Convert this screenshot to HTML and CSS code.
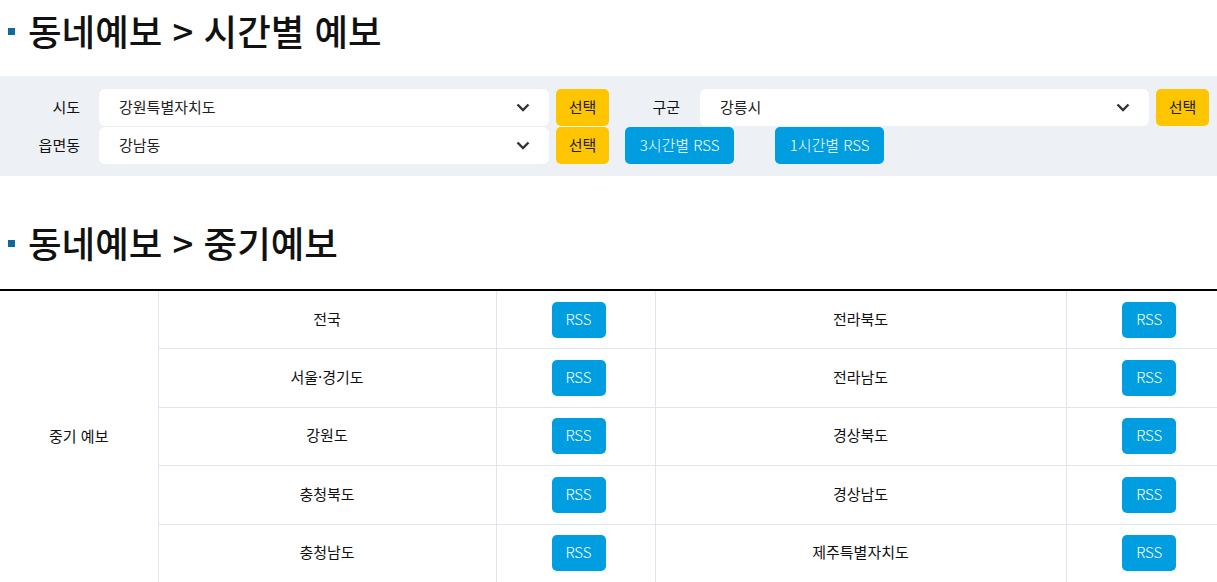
FILE: index.html
```html
<!DOCTYPE html>
<html lang="ko">
<head>
  <meta charset="UTF-8">
  <meta name="viewport" content="width=device-width, initial-scale=1.0">
  <title>동네예보 RSS</title>
  <link rel="stylesheet" href="styles.css">
</head>
<body>

  <h2 class="section-title">동네예보 &gt; 시간별 예보</h2>

  <div class="search-panel">
    <div class="search-row">
      <label class="field-label">시도</label>
      <div class="select-box">
        <span>강원특별자치도</span>
        <svg class="chevron" width="14" height="9" viewBox="0 0 14 9"><path d="M1.5 1.5 L7 7 L12.5 1.5" fill="none" stroke="#333" stroke-width="2.4"/></svg>
      </div>
      <button type="button" class="btn-select">선택</button>

      <label class="field-label label-gugun">구군</label>
      <div class="select-box select-right">
        <span>강릉시</span>
        <svg class="chevron" width="14" height="9" viewBox="0 0 14 9"><path d="M1.5 1.5 L7 7 L12.5 1.5" fill="none" stroke="#333" stroke-width="2.4"/></svg>
      </div>
      <button type="button" class="btn-select">선택</button>
    </div>

    <div class="search-row">
      <label class="field-label">읍면동</label>
      <div class="select-box">
        <span>강남동</span>
        <svg class="chevron" width="14" height="9" viewBox="0 0 14 9"><path d="M1.5 1.5 L7 7 L12.5 1.5" fill="none" stroke="#333" stroke-width="2.4"/></svg>
      </div>
      <button type="button" class="btn-select">선택</button>
      <button type="button" class="btn-rss btn-wide first-rss">3시간별 RSS</button>
      <button type="button" class="btn-rss btn-wide second-rss">1시간별 RSS</button>
    </div>
  </div>

  <h2 class="section-title second">동네예보 &gt; 중기예보</h2>

  <div class="table-wrap">
    <table class="rss-table">
      <colgroup>
        <col style="width:158px">
        <col style="width:338px">
        <col style="width:159px">
        <col style="width:411px">
        <col style="width:166px">
      </colgroup>
      <tbody>
        <tr>
          <th rowspan="5">중기 예보</th>
          <td>전국</td>
          <td class="btn-cell shift"><button type="button" class="btn-rss">RSS</button></td>
          <td>전라북도</td>
          <td class="btn-cell"><button type="button" class="btn-rss">RSS</button></td>
        </tr>
        <tr>
          <td>서울·경기도</td>
          <td class="btn-cell shift"><button type="button" class="btn-rss">RSS</button></td>
          <td>전라남도</td>
          <td class="btn-cell"><button type="button" class="btn-rss">RSS</button></td>
        </tr>
        <tr>
          <td>강원도</td>
          <td class="btn-cell shift"><button type="button" class="btn-rss">RSS</button></td>
          <td>경상북도</td>
          <td class="btn-cell"><button type="button" class="btn-rss">RSS</button></td>
        </tr>
        <tr>
          <td>충청북도</td>
          <td class="btn-cell shift"><button type="button" class="btn-rss">RSS</button></td>
          <td>경상남도</td>
          <td class="btn-cell"><button type="button" class="btn-rss">RSS</button></td>
        </tr>
        <tr>
          <td>충청남도</td>
          <td class="btn-cell shift"><button type="button" class="btn-rss">RSS</button></td>
          <td>제주특별자치도</td>
          <td class="btn-cell"><button type="button" class="btn-rss">RSS</button></td>
        </tr>
      </tbody>
    </table>
  </div>

</body>
</html>
```

FILE: styles.css
```css
html, body {
  overflow: hidden;
}

body {
  margin: 0;
  font-family: "Noto Sans CJK KR", "Noto Sans", sans-serif;
  font-size: 15px;
  color: #111;
}

.section-title {
  display: flex;
  align-items: center;
  margin: 0 0 16px;
  padding-left: 8px;
  height: 60px;
  font-size: 36.5px;
  font-weight: 500;
  color: #111;
}

.section-title::before {
  content: "";
  width: 7px;
  height: 7px;
  margin-right: 13px;
  margin-top: 3px;
  background-color: #0e6a9c;
}

.section-title.second {
  margin-top: 36px;
  margin-bottom: 17px;
}

.search-panel {
  padding: 13px 0 12px;
  background-color: #edf0f5;
}

.search-row {
  display: flex;
  align-items: center;
  height: 37px;
}

.search-row + .search-row {
  margin-top: 1px;
}

.field-label {
  width: 80px;
  margin-right: 19px;
  padding-bottom: 2px;
  text-align: right;
  color: #111;
}

.label-gugun {
  width: 71px;
  margin-right: 20px;
}

.select-box {
  display: flex;
  align-items: center;
  justify-content: space-between;
  box-sizing: border-box;
  width: 450px;
  height: 37px;
  padding: 0 19px 0 20px;
  background-color: #fff;
  border-radius: 6px;
  color: #222;
}

.select-box span {
  padding-bottom: 3px;
}

.select-right {
  width: 449px;
}

.chevron {
  display: block;
}

button {
  box-sizing: border-box;
  font-family: "Noto Sans CJK KR", "Noto Sans", sans-serif;
  font-size: 15px;
  border: none;
  border-radius: 5px;
  cursor: pointer;
  padding: 0 0 3px;
}

.btn-select {
  width: 53px;
  height: 37px;
  margin-left: 7px;
  background-color: #ffc600;
  color: #222;
}

.btn-rss {
  width: 54px;
  height: 36px;
  background-color: #009ee0;
  color: #fff;
  font-weight: 300;
}

.btn-wide {
  width: 109px;
  height: 37px;
}

.first-rss {
  margin-left: 16px;
}

.second-rss {
  margin-left: 41px;
}

.table-wrap {
  width: 100%;
  overflow: hidden;
}

.rss-table {
  width: 1232px;
  table-layout: fixed;
  border-collapse: collapse;
  border-top: 2px solid #000;
}

.rss-table th,
.rss-table td {
  height: 58.5px;
  padding: 0 0 3px;
  box-sizing: border-box;
  text-align: center;
  border-left: 1px solid #dfe5ee;
  border-bottom: 1px solid #dfe5ee;
  font-weight: 400;
  color: #111;
}

.rss-table th {
  border-left: none;
}

.rss-table td.btn-cell {
  padding-bottom: 0;
}

.rss-table td.shift {
  padding-left: 6px;
}

.rss-table td button {
  vertical-align: middle;
}
```
